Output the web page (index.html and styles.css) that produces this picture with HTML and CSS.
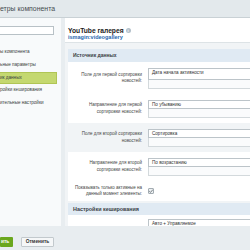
FILE: index.html
```html
<!DOCTYPE html>
<html lang="ru">
<head>
<meta charset="utf-8">
<link rel="stylesheet" href="styles.css">
</head>
<body>
<div class="dialog">
  <div class="titlebar">етры компонента</div>
  <div class="body">
    <aside class="side">
      <div class="search"></div>
      <ul class="nav">
        <li>ы компонента</li>
        <li>ьные параметры</li>
        <li class="active">ик данных</li>
        <li>ройки кеширования</li>
        <li>ительные настройки</li>
      </ul>
    </aside>
    <main class="main">
      <div class="head">
        <div class="title">YouTube галерея <span class="info">i</span></div>
        <div class="code">ismagin:videogallery</div>
      </div>
      <div class="content">
        <div class="section">Источник данных</div>
        <div class="row">
          <div class="label">Поле для первой сортировки новостей:</div>
          <div class="field"><div class="select tall">Дата начала активности</div><div class="text"></div></div>
        </div>
        <div class="row">
          <div class="label">Направление для первой сортировки новостей:</div>
          <div class="field"><div class="select">По убыванию</div><div class="text"></div></div>
        </div>
        <div class="row alt">
          <div class="label">Поле для второй сортировки новостей:</div>
          <div class="field"><div class="select">Сортировка</div><div class="text"></div></div>
        </div>
        <div class="row">
          <div class="label">Направление для второй сортировки новостей:</div>
          <div class="field"><div class="select">По возрастанию</div><div class="text"></div></div>
        </div>
        <div class="row short">
          <div class="label">Показывать только активные на данный момент элементы:</div>
          <div class="field"><span class="check"><svg viewBox="0 0 6 6" width="6" height="6"><path d="M1.2 3.1 L2.5 4.4 L4.9 1.6" fill="none" stroke="#6b747a" stroke-width="0.9"/></svg></span></div>
        </div>
        <div class="section s2">Настройки кеширования</div>
        <div class="row last">
          <div class="label"></div>
          <div class="field"><div class="select">Авто + Управляемое</div></div>
        </div>
      </div>
    </main>
  </div>
  <div class="footer">
    <span class="btn save">ить</span>
    <span class="btn cancel">Отменить</span>
  </div>
</div>
</body>
</html>
```

FILE: styles.css
```css
html, body {
  margin: 0;
  padding: 0;
}
body {
  width: 250px;
  height: 250px;
  overflow: hidden;
  background: #e8edf0;
  font-family: "Liberation Sans", Arial, sans-serif;
  color: #333;
}
.dialog {
  display: flex;
  flex-direction: column;
  height: 250px;
}
.titlebar {
  height: 17px;
  line-height: 18px;
  background: #e3e9ec;
  border-bottom: 1px solid #c9d1d5;
  font-size: 6.9px;
  color: #454b4f;
  white-space: nowrap;
}
.body {
  display: flex;
  height: 208px;
  gap: 4px;
}
.side {
  width: 61px;
  flex: none;
  background: #f8fafb;
  padding-top: 8px;
  box-sizing: border-box;
  overflow: hidden;
}
.search {
  margin-left: -4px;
  width: 58px;
  height: 9px;
  box-sizing: border-box;
  background: #fff;
  border: 1px solid #b8c1c6;
}
.nav {
  list-style: none;
  margin: 11px 0 0;
  padding: 0;
}
.nav li {
  height: 12.75px;
  line-height: 12.75px;
  width: 57px;
  font-size: 4.6px;
  color: #3a3f42;
  white-space: nowrap;
  box-sizing: border-box;
}
.nav li.active {
  background: #c4d870;
  border: 1px solid #b0c555;
  border-left: none;
  line-height: 10.75px;
}
.main {
  flex: 1;
  min-width: 0;
  background: #f1f4f6;
  overflow: hidden;
}
.head {
  background: #fff;
  border-bottom: 1px solid #dde3e6;
  padding: 8.5px 0 0 3px;
  box-sizing: border-box;
  height: 25px;
}
.title {
  font-size: 6.7px;
  line-height: 7px;
  font-weight: bold;
  color: #222;
  display: flex;
  align-items: center;
  gap: 2px;
  white-space: nowrap;
}
.info {
  width: 5px;
  height: 5px;
  border-radius: 50%;
  background: #b3c0ca;
  color: #fff;
  font-size: 4px;
  line-height: 5px;
  text-align: center;
}
.code {
  font-size: 5.5px;
  line-height: 6.5px;
  color: #2767b0;
  font-weight: bold;
  white-space: nowrap;
}
.content {
  margin-left: 3px;
  padding-top: 6px;
}
.section {
  height: 13px;
  line-height: 13px;
  background: #e0eaf3;
  font-size: 5px;
  font-weight: bold;
  color: #3a4045;
  padding-left: 5px;
  white-space: nowrap;
}
.section.s2 {
  margin-top: 2px;
  height: 12px;
  line-height: 12px;
  font-size: 5.4px;
}
.row {
  display: grid;
  grid-template-columns: 74px 1fr;
  column-gap: 6px;
  align-items: center;
  padding: 5.5px 0;
  background: #fff;
}
.row.alt {
  background: #f1f4f6;
}
.row.short {
  padding: 4px 0;
}
.row.last {
  padding: 4px 0 0;
}
.label {
  text-align: right;
  font-size: 4.5px;
  line-height: 6.2px;
  color: #444;
}
.field {
  display: flex;
  flex-direction: column;
  width: 130px;
}
.select {
  height: 9px;
  line-height: 8px;
  box-sizing: border-box;
  background: #fff;
  border: 1px solid #bcc4c9;
  font-size: 4.6px;
  padding-left: 3px;
  color: #333;
  white-space: nowrap;
}
.select.tall {
  height: 12px;
  line-height: 8px;
}
.text {
  height: 9px;
  box-sizing: border-box;
  background: #fafbfc;
  border: 1px solid #d3d9dc;
  border-top: none;
}
.check {
  width: 6px;
  height: 6px;
  border: 1px solid #a3acb2;
  background: #eef1f3;
  box-sizing: border-box;
  border-radius: 1px;
  display: flex;
  align-items: center;
  justify-content: center;
  overflow: hidden;
}
.check svg {
  flex: none;
}
.footer {
  flex: 1;
  display: flex;
  align-items: flex-start;
  gap: 8px;
  padding-top: 11px;
  box-sizing: border-box;
}
.btn {
  height: 10px;
  line-height: 10px;
  font-size: 4.8px;
  font-weight: bold;
  box-sizing: border-box;
  border-radius: 1px;
  white-space: nowrap;
}
.save {
  background: #6aa71e;
  color: #fff;
  padding: 0 3px 0 1px;
  width: 13px;
}
.cancel {
  background: #f5f7f8;
  border: 1px solid #c2c9cd;
  color: #333;
  width: 33px;
  text-align: center;
  line-height: 8px;
}
```
